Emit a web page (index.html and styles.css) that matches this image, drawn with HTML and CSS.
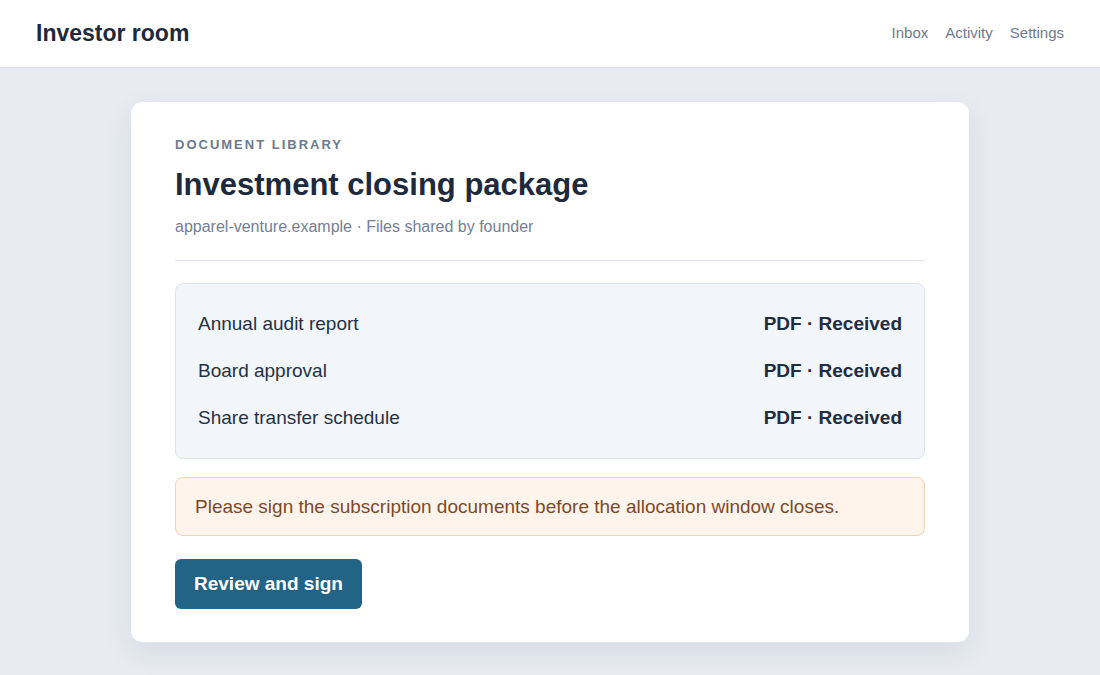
FILE: index.html
```html
<!DOCTYPE html>
<html lang="en">
<head>
  <meta charset="UTF-8" />
  <meta name="viewport" content="width=device-width, initial-scale=1.0"/>
  <title>Investor room</title>
  <link rel="stylesheet" href="styles.css">
</head>
<body>
  <header class="topbar">
    <div class="brand">Investor room</div>
    <nav class="nav">
      <a href="#">Inbox</a>
      <a href="#">Activity</a>
      <a href="#">Settings</a>
    </nav>
  </header>

  <main class="page">
    <section class="card">
      <div class="eyebrow">Document library</div>
      <h1>Investment closing package</h1>
      <p class="meta">apparel-venture.example · Files shared by founder</p>
      <hr class="divider">

      <!-- file list -->
      <ul class="files">
        <li><span>Annual audit report</span><strong>PDF · Received</strong></li>
        <li><span>Board approval</span><strong>PDF · Received</strong></li>
        <li><span>Share transfer schedule</span><strong>PDF · Received</strong></li>
      </ul>

      <div class="notice">Please sign the subscription documents before the allocation window closes.</div>

      <button class="primary">Review and sign</button>
    </section>
  </main>
</body>
</html>
```

FILE: styles.css
```css
body {
  margin: 0;
  background-color: #e8ebf2;
  font-family: "Liberation Sans", Arial, sans-serif;
  color: #1e2a3b;
}

.topbar {
  display: flex;
  justify-content: space-between;
  align-items: center;
  height: 67px;
  padding: 0 36px;
  background-color: white;
  border-bottom: 1px solid #d8dde6;
}

.brand {
  font-size: 23px;
  font-weight: bold;
  color: #1e2a3b;
}

.nav {
  display: flex;
  gap: 17px;
  padding-bottom: 2px;
}

.nav a {
  font-size: 15px;
  color: #6f7a8e;
  text-decoration: none;
}

.page {
  display: flex;
  justify-content: center;
  padding: 33px 0;
}

.card {
  width: 750px;
  padding: 34px 44px 33px;
  background-color: white;
  border: 1px solid #e1e5ec;
  border-radius: 12px;
  box-shadow: 0 10px 28px rgba(30, 42, 59, 0.08);
}

.eyebrow {
  font-size: 13px;
  font-weight: bold;
  letter-spacing: 2px;
  text-transform: uppercase;
  color: #6c7a8d;
  line-height: 18px;
}

h1 {
  margin: 11px 0 0;
  font-size: 31px;
  line-height: 40px;
  color: #1e2a3b;
}

.meta {
  margin: 12px 0 0;
  font-size: 16px;
  line-height: 20px;
  color: #748095;
}

.divider {
  margin: 23px 0 22px;
  border: none;
  border-top: 1px solid #e2e7ee;
}

.files {
  list-style: none;
  margin: 0;
  padding: 16px 22px 17px;
  background-color: #f2f5f9;
  border: 1px solid #dde3ea;
  border-radius: 8px;
}

.files li {
  display: flex;
  justify-content: space-between;
  align-items: center;
  height: 47px;
  font-size: 19px;
}

.files span {
  color: #243244;
}

.files strong {
  color: #1e2d3f;
}

.notice {
  margin-top: 18px;
  padding: 18px 19px;
  font-size: 19px;
  line-height: 21px;
  color: #7b4a2b;
  background-color: #fff4eb;
  border: 1px solid #efd3b6;
  border-radius: 8px;
}

.primary {
  margin-top: 23px;
  padding: 14px 19px;
  font-family: inherit;
  font-size: 19px;
  line-height: 22px;
  font-weight: bold;
  color: white;
  background-color: #236385;
  border: none;
  border-radius: 6px;
}
```
